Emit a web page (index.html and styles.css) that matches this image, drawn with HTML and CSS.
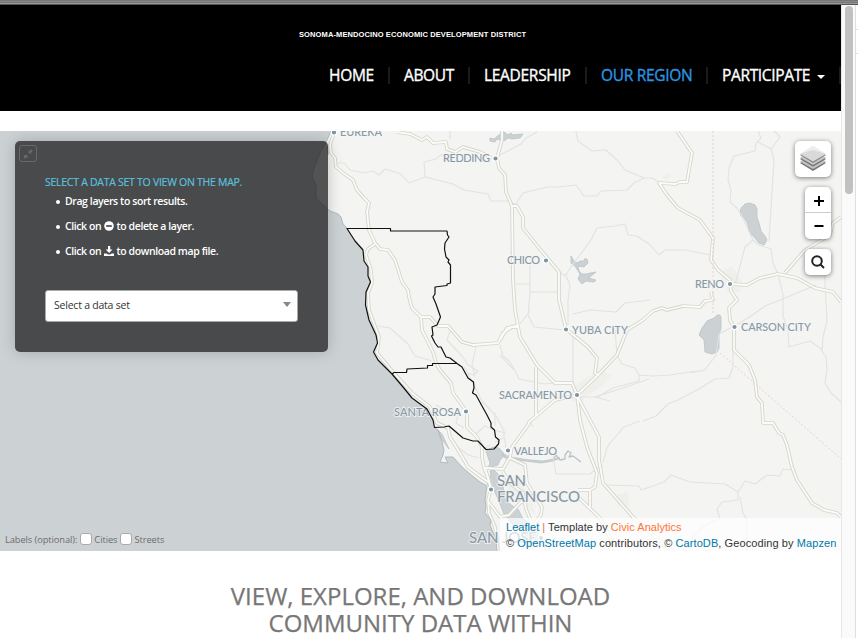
FILE: index.html
```html
<!DOCTYPE html>
<html lang="en">
<head>
<meta charset="utf-8">
<title>Our Region</title>
<link rel="stylesheet" href="styles.css">
</head>
<body>
<div class="chrome-edge"></div>
<div class="window">
<div class="page">
  <header class="site-header">
    <div class="brand">SONOMA-MENDOCINO ECONOMIC DEVELOPMENT DISTRICT</div>
    <nav class="nav">
      <a class="n-home">HOME</a><a class="n-about">ABOUT</a><a class="n-lead">LEADERSHIP</a><a class="n-region active">OUR REGION</a><a class="n-part">PARTICIPATE<i class="caret"></i></a>
    </nav>
  </header>
  <main>
    <section class="map">
      <svg class="tiles" viewBox="0 131 841 420" width="841" height="420">
        <defs>
          <g id="roads">
            <path d="M334 133L330 145L331 153L335 158L336 167L343 173L353 180L357 190L364 198L369 203L367 212L369 230L375 243L380 249L388 250L395 260L402 282L408 290L409 297L412 308L421 317L422 330L433 352L436 363L440 370L451 383L453 393L467 412L467 427L477 437L482 447L482 457L484 468L488 477L491 489L488 500L489 513L495 527L498 551"/>
            <path d="M375 244L368 249L366 255L371 270L372 283L368 293L369 310L379 337L377 353L393 372L412 393L430 407L437 423L448 428L450 437L460 453L468 467L488 482"/>
            <path d="M421 317H430L438 326H448L462 342L473 345L498 343L503 333L512 327H519"/>
            <path d="M502 131V140L497 158L499 168L505 175L506 192L512 206L513 280L515 310L520 337L537 365L555 383H572L577 395L580 420L587 447L597 473L595 487L590 490H578M590 490V507M578 497L600 518L611 540V551"/>
            <path d="M512 206H517L523 217V228L535 243L559 272V300L566 329L588 347L597 358L595 373L599 375"/>
            <path d="M491 489L485 468L503 469L510 457L512 447L528 425L529 422L555 400L577 395L600 373L617 355L627 330L643 320L653 311L662 308L667 310L683 306L700 307L705 301L713 300L711 292"/>
            <path d="M677 131L692 153L687 182L680 182L676 184L659 183L667 195L678 208L700 220L713 238L711 260L718 270L730 280L731 291L737 300L729 308L730 320L734 327V350L749 365L755 380L757 397L762 403L763 423L773 423L779 433L783 435L787 445L792 467L797 480L812 503L824 510L837 513L841 517"/>
            <path d="M730 284L747 285L760 278L778 274L797 278L815 288L833 292L841 302M785 273L805 250L830 235L833 223L841 217"/>
            <path d="M577 395L583 407L599 437V460L603 483L633 517L660 541L672 551"/>
            <path d="M536 367V417M519 325L507 328L500 340M510 458L525 465L527 483L542 507L541 515L535 523L548 551"/>
            <path d="M503 472L510 483L523 493L526 509L531 521M488 501L500 517L509 515L520 503L526 499M397 132L410 134L422 140L427 137L433 143L446 142L447 149L455 152L463 147L480 152L492 158"/>
          </g>
        </defs>
        <rect class="sea" y="131" width="841" height="420"/>
        <path class="land" d="M331 131L326 142L320 153L314 168L312 176L316 185V198L323 205L330 211L338 214L341 217L343 224L347 228L355 241L363 250L364 261L368 267V276L370 282L366 292L365 305L369 320L376 335L377 343L373 352L378 360L392 374L403 387L412 398L427 409L433 420L434 427L438 430L441 438L444 450L443 455L440 462L448 463L445 457L453 457L462 467L470 474L480 482L487 486L485 500L486 507L485 513L491 520L490 525L492 530L496 540L497 551H841V131Z"/>
        <g class="water">
          <path d="M486 451L493 447L499 448L505 455L500 460L498 465L488 468L490 463Z"/>
          <path d="M490 471L494 470L499 475L497 482L503 486L505 498L511 505L518 509L522 517L535 529L540 542L525 535L512 524L504 514L500 504L494 490L487 484L490 481L487 479L491 475Z"/>
          <path d="M438 430L442 434L449 449L446 445L440 437Z"/>
          <path d="M502 454L510 457L523 459L530 460L543 461L554 459L560 458L553 461L541 463L525 461L505 458Z"/>
          <path d="M490 138L494 139L500 134L504 132L508 135L511 133L513 135L523 134L520 138L512 139L508 138L504 141L497 139L495 142L490 141Z"/>
          <path d="M571 256L574 261L577 263L580 261L585 261L584 259H587L588 263L584 267L578 266L579 271L582 274L587 274L590 273L596 272L590 277L588 278L596 280L594 282L586 281L582 284L578 279L580 274L575 266L571 263Z"/>
          <path d="M741 208L745 204L750 203L755 205L757 209V217L759 223L761 231L765 236L767 240L764 245L759 243L754 237L749 232L748 225L746 220L741 216L740 212Z"/>
          <path d="M714 318L717 315H720L721 318V328L719 335L719 348L717 352L712 354L705 352L704 340L699 335L702 328L707 321Z"/>
          <path d="M327 148L331 140V144L328 155Z"/>
        </g>
        <path class="channel" d="M554 459L556 455L560 460L565 459L565 455L568 451L571 453L569 457L573 456L577 459L581 462"/>
        <g class="urban">
          <path d="M720 272L732 266L743 283L739 292L728 292Z"/>
          <path d="M579 382L600 370L613 375L603 385L585 397L580 403L571 400L573 390Z"/>
          <path d="M502 475L519 480L530 495L536 515L526 507L511 496Z"/>
          <path d="M662 177L670 173L671 177L666 180Z"/>
          <path d="M617 495L627 492L630 507L617 506Z"/>
        </g>
        <g class="minor">
          <path d="M338 163L344 163L350 170L364 173L373 171L379 175L385 169L401 174L409 183L425 177L453 184L464 190L488 194L491 201L510 201L515 205L523 193L535 190L547 187L558 187L576 185L584 196H597L601 191L627 190L634 183L644 178L652 178L659 182"/>
          <path d="M425 177L424 162L436 159L441 155H455M450 131V139M500 155L521 144L526 138L537 132M576 131L578 141L585 146L592 151L606 150L618 161L625 170L644 178"/>
          <path d="M565 276L573 264L580 255L591 240L597 228L615 226L625 224L628 235L637 236L649 244L659 255L665 250L685 250L711 255"/>
          <path d="M559 272L566 276L570 285L568 300L568 325M530 265V292H559M530 292L528 315L534 327L565 330M514 284H530M520 324L530 311M573 314L590 310L616 312L625 303L650 300M514 370L500 355M533 427L529 420"/>
          <path d="M573 334V383M615 330L617 355L622 364L635 368L639 375L653 376L670 375L690 372L700 371M610 401L595 397L620 389L649 379M577 397L598 397L613 388L639 381V374"/>
          <path d="M603 462L607 448L610 443L624 427L640 421M643 421L656 416L668 404L678 400L699 389L715 379L729 378L733 367V332"/>
          <path d="M553 456L556 474L590 474L597 468L603 466M606 485L639 486L641 490L664 482L671 475L690 482L725 484L738 492L745 481L755 484L767 475L780 476L783 469L792 470M738 492L738 500L722 502L717 509L720 519L708 523L692 537L683 551M740 497L743 513L747 520V551"/>
          <path d="M758 131L761 138L756 143L755 151L734 156L729 168L728 180L731 190L730 202L737 208L743 218L753 240L759 245L771 249L773 263L778 274L783 295V316L788 330L789 347L810 341L820 348L826 357L827 370L825 383L831 393L841 402"/>
          <path d="M758 142L771 149L774 160L771 208L769 241M771 149L780 137L774 131M735 285L745 247L753 240M816 285L785 298L765 306L751 316L740 323L719 334L716 355L705 370L690 373M825 250V284L827 321L823 337L822 351"/>
          <path d="M378 326L390 328L408 344L415 356L432 361M450 331L447 340L462 356L468 365L478 371L474 375L467 373M475 377L472 365L476 346M500 345L503 356L509 361L515 370L519 379L545 384L553 383"/>
          <path d="M464 367L474 385L482 401L496 416L504 431V438L495 442M436 405L447 411L458 414L456 423L464 428M476 434L485 426L493 430L506 433M505 438L506 455M495 413V426"/>
          <path d="M448 429L454 444L468 455L479 458M482 450L490 445"/>
        </g>
        <use href="#roads" class="road-case"/>
        <use href="#roads" class="road-fill"/>
        <path class="state" d="M713 131V315M720 353L841 459"/>
        <path class="coast" d="M331 131L326 142L320 153L314 168L312 176L316 185V198L323 205L330 211L338 214L341 217L343 224L347 228M434 427L438 430L441 438L444 450L443 455L440 462L448 463L445 457L453 457L462 467L470 474L480 482L487 486L485 500L486 507L485 513L491 520L490 525L492 530L496 540L497 551"/>
        <g class="labels">
          <text x="340" y="136" textLength="42">EUREKA</text>
          <text x="443" y="162" textLength="47">REDDING</text>
          <text x="507" y="264" textLength="33">CHICO</text>
          <text x="572" y="333.500" textLength="56">YUBA CITY</text>
          <text x="695" y="288" textLength="29">RENO</text>
          <text x="741" y="331" textLength="70">CARSON CITY</text>
          <text x="499" y="399" textLength="73">SACRAMENTO</text>
          <text x="394" y="415.500" textLength="67">SANTA ROSA</text>
          <text x="514" y="454.500" textLength="43">VALLEJO</text>
          <g class="big"><text x="497" y="486" textLength="29">SAN</text><text x="497" y="502" textLength="83">FRANCISCO</text><text x="469" y="543" textLength="68">SAN JOSE</text></g>
        </g>
        <g class="dots"><circle cx="334" cy="132.500" r="2.700"/><circle cx="495.500" cy="158.500" r="2.700"/><circle cx="546" cy="260.500" r="2.700"/><circle cx="566" cy="329.500" r="2.700"/><circle cx="730" cy="284" r="2.700"/><circle cx="734.500" cy="327" r="2.700"/><circle cx="577" cy="395" r="2.700"/><circle cx="466" cy="411.500" r="2.700"/><circle cx="508" cy="450.500" r="2.700"/><circle cx="491" cy="489.500" r="2.700"/><circle cx="541" cy="538" r="2.700"/></g>
        <path class="county" d="M347 228.500H390.500V231H447L447.500 235L449 237L445 243L444.500 249L446 257L449 260L448 262L450.500 265V283L447 284V285.500L435 287V294L433 297L436 304L440.500 317L437 325L432 327L433 335L431.500 336L435 343L438 347H441L446 357L450 358L457 363.500L462 367L468 378L473.500 382L474 388L472.500 393L476 395L482 406L487 415L491 423V427L494.500 430L495.500 437L499 440L498.500 444L494 449L486 449.500L478 441H473L463 438L449 426L444 427L434.500 427.500L433 420L427 409L412 398L403 387L392 374L378 360L373.500 352L377.500 343L376 335L369 320L365.500 305L366 292L370.500 282L368 276V267L364 261L363 250L355 241ZM392 374L394 372.500H406.500L407 369L427.500 368V365.500H432.500V363.500H457"/>
      </svg>

      <aside class="panel">
        <button class="shrink" aria-label="Collapse"><svg width="14" height="14" viewBox="0 0 14 14"><path d="M3 11L5 9M11 3L9 5" stroke="#696c6d" stroke-width="2"/><path d="M3 8H6.500V11.500ZM7.500 3V6.500H11Z" fill="#696c6d"/></svg></button>
        <h2>SELECT A DATA SET TO VIEW ON THE MAP.</h2>
        <ul>
          <li>Drag layers to sort results.</li>
          <li>Click on <svg class="ic" width="10" height="10" viewBox="0 0 10 10"><circle cx="5" cy="5" r="4.800" fill="#fff"/><path d="M2.200 5H7.800" stroke="#484a4b" stroke-width="1.700"/></svg> to delete a layer.</li>
          <li>Click on <svg class="ic" width="10" height="10" viewBox="0 0 10 10"><path d="M4 0H6.200V3.500H8.500L5.100 7L1.700 3.500H4ZM0 7.500H2.500L4 8.500H6.200L7.600 7.500H10V10H0Z" fill="#fff"/></svg> to download map file.</li>
        </ul>
        <div class="select"><span>Select a data set</span><i></i></div>
      </aside>

      <div class="controls">
        <div class="ctl layers"><svg width="28" height="28" viewBox="0 0 28 28"><path d="M1 18L14 26L27 18L14 10Z" fill="#777"/><path d="M1 16.500L14 24L27 16.500L14 8Z" fill="#c4c4c4"/><path d="M1 14L14 21.800L27 14L14 6Z" fill="#777"/><path d="M1 12.500L14 20L27 12.500L14 5Z" fill="#c8c8c8"/><path d="M1 10L14 18L27 10L14 2Z" fill="#858585"/><path d="M1 9L14 16.500L27 9L14 1Z" fill="#d9d9d9"/><path d="M1 9L14 1L27 9L21 7L14 5L7 7Z" fill="#eee"/></svg></div>
        <div class="ctl zoom"><a><svg width="12" height="12"><path d="M1 6H11M6 1V11"/></svg></a><a><svg class="minus" width="12" height="12"><path d="M1.500 6H10.500"/></svg></a></div>
        <div class="ctl search"><svg width="16" height="16" viewBox="0 0 16 16"><circle cx="7" cy="7" r="4.800"/><path d="M10.500 10.500L14 14"/></svg></div>
      </div>

      <div class="label-options">Labels (optional): <span class="box"></span><span class="t-city">Cities</span><span class="box"></span><span>Streets</span></div>
      <div class="attribution"><div class="a1"><a>Leaflet</a> <b>|</b> Template by <a class="civic">Civic Analytics</a></div><div class="a2">© <a>OpenStreetMap</a> contributors, © <a>CartoDB</a>, Geocoding by <a>Mapzen</a></div></div>
    </section>
    <h1>VIEW, EXPLORE, AND DOWNLOAD<br>COMMUNITY DATA WITHIN</h1>
  </main>
</div>
<div class="scrollbar"><div class="thumb"></div></div>
<div class="behind"></div>
</div>
</body>
</html>
```

FILE: styles.css
```css
* { box-sizing: border-box; }
body { margin: 0; height: 638px; overflow: hidden; background: #fff; font-family: "Open Sans", sans-serif; }
.chrome-edge { height: 5px; background: linear-gradient(#777 0 1px, #888 1px 2px, #777 2px 3px, #999 3px 4px, #555 4px); }
.window { display: flex; height: 633px; }
.page { width: 841px; overflow: hidden; }
.scrollbar { width: 15px; background: #fafafa; border-left: 1px solid #e7e7e7; border-right: 1px solid #dfdfdf; padding: 1px 0 0 3px; }
.thumb { width: 8px; height: 188px; border-radius: 4px; background: #c1c1c1; }
.behind { width: 2px; height: 49px; background: linear-gradient(#fff 24px, #ddd 24px 25px, #fff 25px 48px, #ddd 48px); }

.site-header { height: 106px; background: #000; color: #fff; padding-top: 25px; overflow: hidden; }
.brand { padding-left: 299px; font: bold 7.5px/10px "Liberation Sans", sans-serif; letter-spacing: .11px; white-space: nowrap; }
.nav { display: flex; margin: 20px 0 0 314px; height: 30px; align-items: center; width: 600px; }
.nav a { display: flex; align-items: center; height: 17px; border-right: 2px solid #1b1b1b; padding-left: 14px; font-size: 15.5px; line-height: 17px; font-weight: 500; -webkit-text-stroke: .35px currentColor; white-space: nowrap; flex: none; }
.nav .n-home { width: 76px; padding-left: 15px; letter-spacing: -.3px; }
.n-about { width: 80px; letter-spacing: -.35px; }
.n-lead { width: 117px; letter-spacing: -.3px; }
.n-region { width: 121px; letter-spacing: -.3px; }
.n-part { width: 133px; letter-spacing: -.35px; }
.nav .active { color: #2b95e0; }
.caret { border: 4px solid transparent; border-top-color: #fff; border-bottom: 0; margin: 3px 0 0 7px; }

.map { position: relative; height: 420px; margin-top: 20px; overflow: hidden; }
.tiles { display: block; }
.tiles path { stroke-linejoin: round; }
.sea { fill: #ccd2d4; }
.land { fill: #f4f4f3; }
.water { fill: #ccd2d4; stroke: #bac3c6; stroke-width: .8; }
.channel { fill: none; stroke: #bac3c6; stroke-width: 1.3; }
.urban { fill: #efefec; }
.minor { fill: none; stroke: #e2e2e0; stroke-width: 1.1; }
.road-case { fill: none; stroke: #d5d5cc; stroke-width: 3.6; }
.road-fill { fill: none; stroke: #fbfbf8; stroke-width: 1.8; }
.state { fill: none; stroke: #ebcfcf; stroke-width: 1; stroke-dasharray: 2 2; }
.coast { fill: none; stroke: #afbabf; stroke-width: 1; }
.county { fill: none; stroke: #111; stroke-width: 1.2; }
.labels { font: 500 11px Lato, sans-serif; fill: #8799a6; stroke: #f4f4f3; stroke-opacity: .8; stroke-width: 2px; paint-order: stroke; }
.labels .big { font-size: 15px; }
.dots { fill: #8093a1; stroke: #fff; stroke-width: 1.2; }

.panel { position: absolute; left: 15px; top: 10px; width: 313px; height: 211px; background: rgba(30, 31, 32, .76); border-radius: 5px; box-shadow: 0 0 15px rgba(0, 0, 0, .2); padding: 4px 30px 0; color: #fff; }
.shrink { display: flex; align-items: center; justify-content: center; width: 18px; height: 17px; margin: 0 0 0 -26px; padding: 0; background: none; border: 1px solid #67696a; border-radius: 3px; }
.panel h2 { margin: 13px 0 0; font-size: 10.5px; line-height: 14px; font-weight: 500; color: #5bc0de; letter-spacing: -.27px; -webkit-text-stroke: .2px currentColor; white-space: nowrap; }
.panel ul { margin: 0; padding: 0 0 0 20px; list-style: none; font-size: 10.5px; font-weight: 600; letter-spacing: -.4px; }
.panel li { height: 25px; line-height: 25px; white-space: nowrap; position: relative; }
.panel li::before { content: ""; position: absolute; left: -9px; top: 11px; width: 4px; height: 4px; border-radius: 50%; background: #fff; }
.ic { vertical-align: -1px; margin: 0 0 0 .5px; }
.select { display: flex; justify-content: space-between; align-items: center; width: 253px; height: 32px; margin-top: 26px; padding: 0 6px 2px 8px; background: #fff; border: 1px solid #aaa; border-radius: 3px; color: #333; font-size: 10.5px; letter-spacing: -.22px; }
.select i { border: 4.500px solid transparent; border-top: 5px solid #888; border-bottom: 0; margin-top: -1px; }

.controls { position: absolute; right: 10px; top: 10px; display: flex; flex-direction: column; align-items: flex-end; gap: 10px; }
.ctl { background: #fff; border-radius: 5px; box-shadow: 0 1px 5px rgba(0, 0, 0, .5); display: flex; align-items: center; justify-content: center; }
.layers { width: 36px; height: 36px; }
.zoom { width: 26px; height: 52px; flex-direction: column; }
.zoom a { width: 26px; height: 26px; display: flex; align-items: center; justify-content: center; }
.zoom a:first-child { border-bottom: 1px solid #ccc; }
.zoom svg { stroke: #000; stroke-width: 2; margin: 2px 0 0 2px; }
.zoom .minus { margin-top: 0; }
.search { width: 26px; height: 26px; }
.search svg { fill: none; stroke: #222; stroke-width: 2; }

.label-options { position: absolute; left: 5px; bottom: 4px; display: flex; align-items: center; height: 16px; font-size: 9.3px; letter-spacing: -.08px; color: #6c6c6c; white-space: nowrap; }
.box { width: 12px; height: 12px; margin: 0 2px 0 3px; background: #fff; border: 1px solid #aaa; border-radius: 3px; }
.attribution { position: absolute; right: 0; bottom: 0; width: 341px; height: 33px; padding: 1px 0 0 6px; background: rgba(255, 255, 255, .7); font: 11px/16px "Liberation Sans", sans-serif; color: #333; white-space: nowrap; }
.a1 { letter-spacing: .03px; }
.a2 { letter-spacing: .09px; }
.attribution a { color: #0078a8; }
.attribution b { color: #e0763c; font-weight: 400; }
.attribution .civic { color: #ff7433; }
h1 { margin: 31px 0 0; font-size: 24px; line-height: 27px; font-weight: 400; color: #777; -webkit-text-stroke: .25px #777; text-align: center; white-space: nowrap; }
```
